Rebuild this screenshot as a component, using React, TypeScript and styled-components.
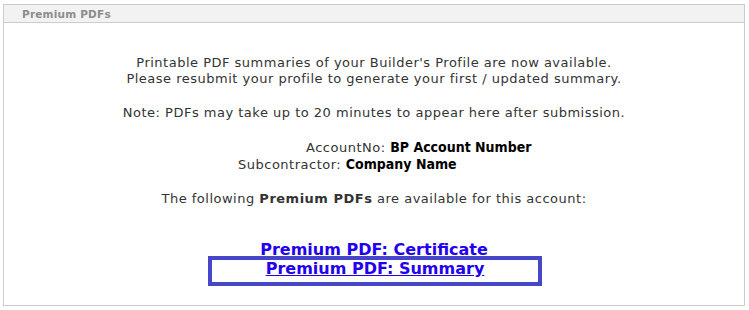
import React from 'react';
import styled, { createGlobalStyle } from 'styled-components';

const GlobalStyle = createGlobalStyle`
  html, body {
    margin: 0;
    padding: 0;
    background: #ffffff;
  }
  body {
    font-family: "DejaVu Sans", Verdana, sans-serif;
  }
`;

const Page = styled.div`
  padding: 4px 4px 0 3px;
  width: 742px;
`;

const Panel = styled.section`
  border: 1px solid #cccccc;
  height: 302px;
  box-sizing: border-box;
  display: flex;
  flex-direction: column;
`;

const PanelHeader = styled.div`
  background: #f2f2f2;
  border-bottom: 1px solid #cccccc;
  height: 17px;
  padding-left: 18px;
  font-size: 10.5px;
  font-weight: bold;
  letter-spacing: 0.2px;
  color: #8c8c8c;
  line-height: 18px;
`;

const PanelBody = styled.div`
  padding-top: 32px;
  text-align: center;
  font-size: 13px;
  letter-spacing: 0.5px;
  line-height: 16px;
  color: #333333;
`;

const Paragraph = styled.p<{ $top?: number }>`
  margin: ${(p) => p.$top ?? 0}px 0 0;
`;

const AccountRow = styled.div<{ $shift: number }>`
  text-align: left;
  padding-left: ${(p) => p.$shift}px;
`;

const Value = styled.span`
  font-family: "DejaVu Sans Condensed", "DejaVu Sans", sans-serif;
  font-weight: bold;
  font-size: 14px;
  letter-spacing: 0;
  color: #000000;
`;

const Strong = styled.strong`
  color: #333333;
`;

const Links = styled.div`
  margin-top: 33px;
  display: flex;
  flex-direction: column;
  align-items: center;
`;

const PdfLink = styled.a<{ $boxed?: boolean }>`
  display: block;
  font-size: 16px;
  font-weight: bold;
  letter-spacing: 0;
  line-height: 19px;
  color: #2200ee;
  text-decoration: ${(p) => (p.$boxed ? 'underline' : 'none')};
  box-sizing: border-box;
  ${(p) =>
    p.$boxed &&
    `
    width: 334px;
    height: 30px;
    border: 4px solid #4646c8;
    padding-top: 1px;
    line-height: 16px;
    margin: -3px 0 0 2px;
  `}
`;

export default function App() {
  return (
    <>
      <GlobalStyle />
      <Page>
        <Panel>
          <PanelHeader>Premium PDFs</PanelHeader>
          <PanelBody>
            <Paragraph>
              Printable PDF summaries of your Builder's Profile are now available.
              <br />
              Please resubmit your profile to generate your first / updated summary.
            </Paragraph>
            <Paragraph $top={18}>
              Note: PDFs may take up to 20 minutes to appear here after submission.
            </Paragraph>
            <Paragraph $top={18} as="div">
              <AccountRow $shift={302}>
                AccountNo: <Value>BP Account Number</Value>
              </AccountRow>
              <AccountRow $shift={234}>
                Subcontractor: <Value>Company Name</Value>
              </AccountRow>
            </Paragraph>
            <Paragraph $top={18}>
              The following <Strong>Premium PDFs</Strong> are available for this account:
            </Paragraph>
            <Links>
              <PdfLink href="#">Premium PDF: Certificate</PdfLink>
              <PdfLink href="#" $boxed>
                Premium PDF: Summary
              </PdfLink>
            </Links>
          </PanelBody>
        </Panel>
      </Page>
    </>
  );
}
